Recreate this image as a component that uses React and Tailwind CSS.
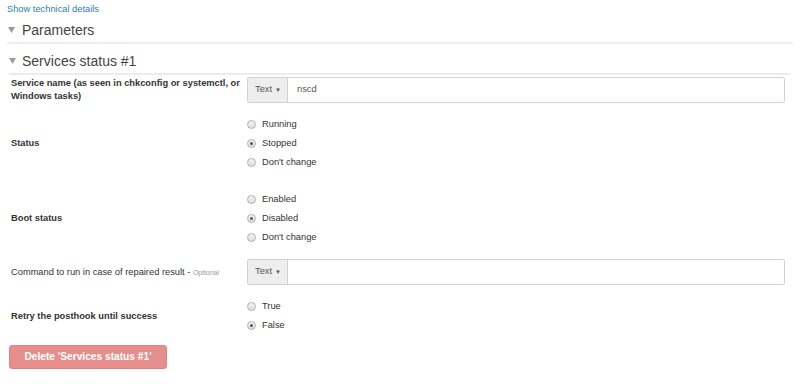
import React from "react";

const Caret = () => (
  <svg width="7" height="6" viewBox="0 0 7 6" className="shrink-0">
    <polygon points="0,0 7,0 3.5,6" fill="#9a9a9a" />
  </svg>
);

const Radio = ({ label, checked }) => (
  <div className="flex items-center h-[19px]">
    <span className="w-[9px] h-[9px] rounded-full border border-[#b0b0b0] bg-gradient-to-b from-[#f4f4f4] to-[#dedede] flex items-center justify-center shrink-0">
      {checked && <span className="w-[3px] h-[3px] rounded-full bg-[#555]" />}
    </span>
    <span className="ml-[6px] text-[9.3px] text-[#333]">{label}</span>
  </div>
);

const TextInput = ({ value }) => (
  <div className="flex-1 flex h-[26px] border border-[#d2d2d2] rounded-[2px] overflow-hidden">
    <div className="w-[40px] bg-[#eeeeee] border-r border-[#d2d2d2] flex items-center pl-[7px] text-[9.3px] text-[#555]">
      Text <span className="ml-[3px] text-[6px]">▼</span>
    </div>
    <div className="flex-1 flex items-center pl-[9px] text-[9.3px] text-[#555]">{value}</div>
  </div>
);

const Row = ({ label, bold = true, children, className = "" }) => (
  <div className={"flex items-center " + className}>
    <div className={"w-[236px] shrink-0 pr-[3px] text-[9.3px] leading-[13px] text-[#333] " + (bold ? "font-bold" : "")}>
      {label}
    </div>
    <div className="flex-1 flex">{children}</div>
  </div>
);

export default function App() {
  return (
    <div className="w-[800px] h-[384px] bg-white overflow-hidden px-[7px] font-['Liberation_Sans',Arial,sans-serif]">
      <div className="pt-[3px] h-[18px] text-[9.3px] leading-[13px] text-[#337ab7]">Show technical details</div>

      <div className="flex items-center gap-[7px] pl-[1px] h-[26px] border-b-2 border-[#ececec]">
        <Caret />
        <span className="text-[14px] text-[#444] leading-none">Parameters</span>
      </div>

      <div className="ml-[2px] mr-[3px] mt-[5px]">
        <div className="flex items-center gap-[6px] h-[26px] border-b-2 border-[#ececec]">
          <Caret />
          <span className="text-[14px] text-[#444] leading-none">Services status #1</span>
        </div>

        <div className="pl-[2px] pr-[5px]">
          <Row label="Service name (as seen in chkconfig or systemctl, or Windows tasks)" className="mt-[2px]">
            <TextInput value="nscd" />
          </Row>

          <Row label="Status" className="mt-[12px]">
            <div className="flex flex-col">
              <Radio label="Running" />
              <Radio label="Stopped" checked />
              <Radio label="Don't change" />
            </div>
          </Row>

          <Row label="Boot status" className="mt-[18px]">
            <div className="flex flex-col">
              <Radio label="Enabled" />
              <Radio label="Disabled" checked />
              <Radio label="Don't change" />
            </div>
          </Row>

          <Row
            bold={false}
            label={
              <>
                Command to run in case of repaired result -{" "}
                <span className="text-[7px] text-[#999]">Optional</span>
              </>
            }
            className="mt-[12px]"
          >
            <TextInput value="" />
          </Row>

          <Row label="Retry the posthook until success" className="mt-[12px]">
            <div className="flex flex-col">
              <Radio label="True" />
              <Radio label="False" checked />
            </div>
          </Row>
        </div>

        <button className="mt-[10px] w-[158px] h-[24px] rounded-[3px] border border-[#d43f3a] bg-[#d9534f] opacity-65 text-white font-bold text-[10.2px]">
          Delete 'Services status #1'
        </button>
      </div>
    </div>
  );
}
